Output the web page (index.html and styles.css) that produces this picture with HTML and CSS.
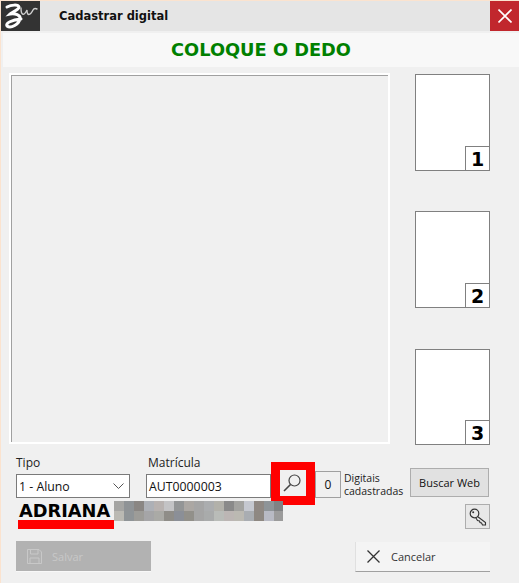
FILE: index.html
```html
<!DOCTYPE html>
<html lang="pt-BR">
<head>
  <meta charset="UTF-8">
  <title>Cadastrar digital</title>
  <link rel="stylesheet" href="styles.css">
</head>
<body>
  <div class="window">
    <div class="titlebar">
      <div class="logo">
        <svg width="39" height="30" viewBox="0 0 39 30">
          <path d="M6 6 C10 4 17 3 18 6 C18 9 11 11 9 13 C14 12 20 14 19 18 C18 23 10 28 6 25 C4 22 11 19 20 18" fill="none" stroke="#fff" stroke-width="3" stroke-linecap="round"/>
          <path d="M20 7 C20 15 23 15 26 9 C26 15 29 15 32 9 C33 7 34 7 36 8" fill="none" stroke="#d0d0d0" stroke-width="1.4" stroke-linecap="round"/>
        </svg>
      </div>
      <div class="title">Cadastrar digital</div>
      <div class="close">
        <svg width="14" height="14" viewBox="0 0 14 14">
          <path d="M0.5 0.5 L13.5 13.5 M13.5 0.5 L0.5 13.5" stroke="#fff" stroke-width="1.6"/>
        </svg>
      </div>
    </div>
    <div class="status">COLOQUE O DEDO</div>

    <div class="capture-row">
      <div class="capture"></div>
      <div class="thumbs">
        <div class="thumb"><span class="thumb-num">1</span></div>
        <div class="thumb"><span class="thumb-num">2</span></div>
        <div class="thumb"><span class="thumb-num">3</span></div>
      </div>
    </div>

    <div class="form-row">
      <div class="field field-tipo">
        <label>Tipo</label>
        <div class="select">
          <span>1 - Aluno</span>
          <svg width="11" height="6" viewBox="0 0 11 6"><path d="M0.5 0.5 L5.5 5.5 L10.5 0.5" fill="none" stroke="#555" stroke-width="1"/></svg>
        </div>
      </div>
      <div class="field field-matricula">
        <label>Matrícula</label>
        <div class="input">AUT0000003</div>
      </div>
      <div class="search-mark">
        <div class="search-btn">
          <svg width="20" height="20" viewBox="0 0 20 20">
            <circle cx="11.5" cy="7.5" r="5.5" fill="none" stroke="#444" stroke-width="1.2"/>
            <path d="M7.5 11.5 L1 18" stroke="#444" stroke-width="1.6"/>
          </svg>
        </div>
      </div>
      <div class="count">0</div>
      <div class="count-label">Digitais<br>cadastradas</div>
      <div class="btn-web">Buscar Web</div>
    </div>

    <div class="name-row">
      <div class="name"><span class="name-text">ADRIANA</span><span class="mosaic"></span></div>
      <div class="btn-key">
        <svg width="18" height="18" viewBox="0 0 18 18">
          <circle cx="5.5" cy="5.5" r="4.3" fill="none" stroke="#333" stroke-width="1.2"/>
          <circle cx="4.2" cy="4.2" r="1" fill="#333"/>
          <path d="M8.5 8.5 L16.5 14.5 L16.5 17 L13.5 17 L12.5 15 L11 14.5 L10.5 13 L8.5 12.5 L6.8 9.8" fill="none" stroke="#333" stroke-width="1.1"/>
        </svg>
      </div>
    </div>

    <div class="action-row">
      <div class="btn-save">
        <svg width="15" height="15" viewBox="0 0 15 15">
          <path d="M0.5 0.5 H12 L14.5 3 V14.5 H0.5 Z M3.5 0.5 V5 H11 V0.5 M3 14.5 V9 H12 V14.5" fill="none" stroke="#c8c8c8" stroke-width="1"/>
        </svg>
        <span>Salvar</span>
      </div>
      <div class="btn-cancel">
        <svg width="13" height="13" viewBox="0 0 13 13">
          <path d="M0.5 0.5 L12.5 12.5 M12.5 0.5 L0.5 12.5" stroke="#333" stroke-width="1.3"/>
        </svg>
        <span>Cancelar</span>
      </div>
    </div>
  </div>
</body>
</html>
```

FILE: styles.css
```css
html, body {
  margin: 0;
  height: 100%;
}
body {
  background: #f0f0f0;
  font-family: 'Open Sans', 'Noto Sans', Arial, sans-serif;
  overflow: hidden;
}
.window {
  width: 519px;
  height: 583px;
  box-sizing: border-box;
  background: #f0f0f0;
  border-top: 1px solid #fbe3cf;
  border-left: 1px solid #fbe3cf;
}
.titlebar {
  display: flex;
  align-items: center;
  height: 30px;
  background: #e5e5e5;
}
.logo {
  width: 39px;
  height: 30px;
  background: #333;
}
.title {
  flex: 1;
  margin-left: 19px;
  font-family: 'DejaVu Sans', Arial, sans-serif;
  font-size: 11.5px;
  font-weight: 700;
  color: #111;
}
.close {
  display: flex;
  align-items: center;
  justify-content: center;
  width: 29px;
  height: 30px;
  background: #c1272d;
}
.status {
  height: 34px;
  margin: 2px 0 0 2px;
  line-height: 34px;
  background: #f8f8f8;
  text-align: center;
  font-family: 'DejaVu Sans', Arial, sans-serif;
  font-size: 17.8px;
  font-weight: 700;
  color: #008000;
}
.capture-row {
  display: flex;
  height: 372px;
  margin-top: 6px;
  padding-left: 8px;
}
.capture {
  box-sizing: border-box;
  width: 381px;
  height: 371px;
  background: #f0f0f0;
  border: 2px solid #fff;
  box-shadow: inset 1px 1px 0 #a0a0a0;
}
.thumbs {
  display: flex;
  flex-direction: column;
  gap: 40px;
  margin: 1px 0 0 25px;
}
.thumb {
  display: flex;
  justify-content: flex-end;
  align-items: flex-end;
  box-sizing: border-box;
  width: 75px;
  height: 97px;
  background: #fff;
  border: 1px solid #808080;
}
.thumb:last-child {
  height: 96px;
  margin-top: 1px;
}
.thumb-num {
  box-sizing: border-box;
  width: 24px;
  height: 24px;
  border-top: 1px solid #808080;
  border-left: 1px solid #808080;
  text-align: center;
  line-height: 24px;
  font-family: 'DejaVu Sans', Arial, sans-serif;
  font-size: 19px;
  font-weight: 700;
  color: #000;
}
.form-row {
  display: flex;
  align-items: flex-end;
  height: 53px;
  padding-left: 15px;
}
.field label {
  display: block;
  margin-bottom: 3px;
  font-size: 12px;
  line-height: 17px;
  color: #222;
}
.field-tipo {
  width: 114px;
  margin-right: 16px;
}
.field-matricula {
  width: 125px;
}
.field-matricula label {
  padding-left: 2px;
}
.select, .input {
  display: flex;
  align-items: center;
  justify-content: space-between;
  box-sizing: border-box;
  height: 24px;
  padding: 0 2px;
  background: #fff;
  border: 1px solid #7a7a7a;
  font-size: 12.3px;
  color: #111;
}
.select svg {
  margin-right: 3px;
}
.search-mark {
  box-sizing: border-box;
  width: 44px;
  height: 43px;
  margin: 0 0 -7px 0;
  padding: 8px 9px;
  background: #f00;
}
.search-btn {
  display: flex;
  align-items: center;
  justify-content: center;
  width: 26px;
  height: 26px;
  background: #f0f0f0;
}
.count {
  box-sizing: border-box;
  width: 26px;
  height: 27px;
  line-height: 25px;
  text-align: center;
  border: 1px solid #a0a0a0;
  font-size: 12px;
  color: #111;
}
.count-label {
  width: 66px;
  margin-left: 3px;
  font-size: 10.5px;
  line-height: 13px;
  color: #222;
}
.btn-web {
  box-sizing: border-box;
  width: 79px;
  height: 29px;
  margin-bottom: 1px;
  line-height: 27px;
  text-align: center;
  background: #e1e1e1;
  border: 1px solid #adadad;
  font-size: 11px;
  color: #111;
}
.name-row {
  display: flex;
  justify-content: space-between;
  align-items: flex-start;
  height: 37px;
  padding: 6px 29px 0 17px;
  box-sizing: border-box;
}
.name {
  display: flex;
  margin-top: -5px;
}
.name-text {
  box-sizing: border-box;
  width: 96px;
  height: 30px;
  padding-left: 1px;
  line-height: 24px;
  border-bottom: 9px solid #f00;
  font-family: 'DejaVu Sans', Arial, sans-serif;
  font-size: 17.8px;
  font-weight: 700;
  color: #000;
  white-space: nowrap;
}
.mosaic {
  display: block;
  width: 169px;
  height: 20px;
  margin-top: 2px;
  background:
    linear-gradient(90deg,
      #a5a5a3 0 10px, #8f9396 0 20px, #8a8683 0 30px, #adb0b6 0 40px, #b8b2b0 0 50px,
      #c3c3c5 0 60px, #939596 0 70px, #aba7a3 0 80px, #a5a5a5 0 90px, #abadaf 0 100px,
      #b2b1aa 0 110px, #8a8a8a 0 120px, #a3a3a0 0 130px, #c5c8d0 0 140px, #8f8883 0 150px,
      #8e9498 0 160px, #808284 0 170px) top / 100% 10px no-repeat,
    linear-gradient(90deg,
      #bab9b3 0 10px, #8f9497 0 20px, #9d9c98 0 30px, #a5a5a7 0 40px, #aaaaa6 0 50px,
      #8f8d88 0 60px, #8b8f97 0 70px, #92908a 0 80px, #a5a5a5 0 90px, #a9abab 0 100px,
      #b9bcb8 0 110px, #bcb6b4 0 120px, #bbb9b2 0 130px, #a9adb2 0 140px, #8e8882 0 150px,
      #b8bac4 0 160px, #9b9b9b 0 170px) bottom / 100% 10px no-repeat;
}
.btn-key {
  display: flex;
  align-items: center;
  justify-content: center;
  box-sizing: border-box;
  width: 25px;
  height: 25px;
  background: #e8e8e8;
  border: 1px solid #adadad;
}
.action-row {
  display: flex;
  justify-content: space-between;
  align-items: flex-start;
  padding: 6px 29px 0 15px;
}
.btn-save {
  display: flex;
  align-items: center;
  box-sizing: border-box;
  width: 135px;
  height: 31px;
  padding-left: 11px;
  background: #b2b2b2;
  border-bottom: 1px solid #f8f8f8;
  font-size: 11px;
  color: #c8c8c8;
}
.btn-save span {
  margin-left: 10px;
}
.btn-cancel {
  display: flex;
  align-items: center;
  box-sizing: border-box;
  width: 135px;
  height: 30px;
  margin-top: 1px;
  padding-left: 11px;
  background: #f4f4f4;
  border-left: 1px solid #e0e0e0;
  border-bottom: 1px solid #a0a0a0;
  font-size: 11px;
  color: #333;
}
.btn-cancel span {
  margin-left: 11px;
}
```
